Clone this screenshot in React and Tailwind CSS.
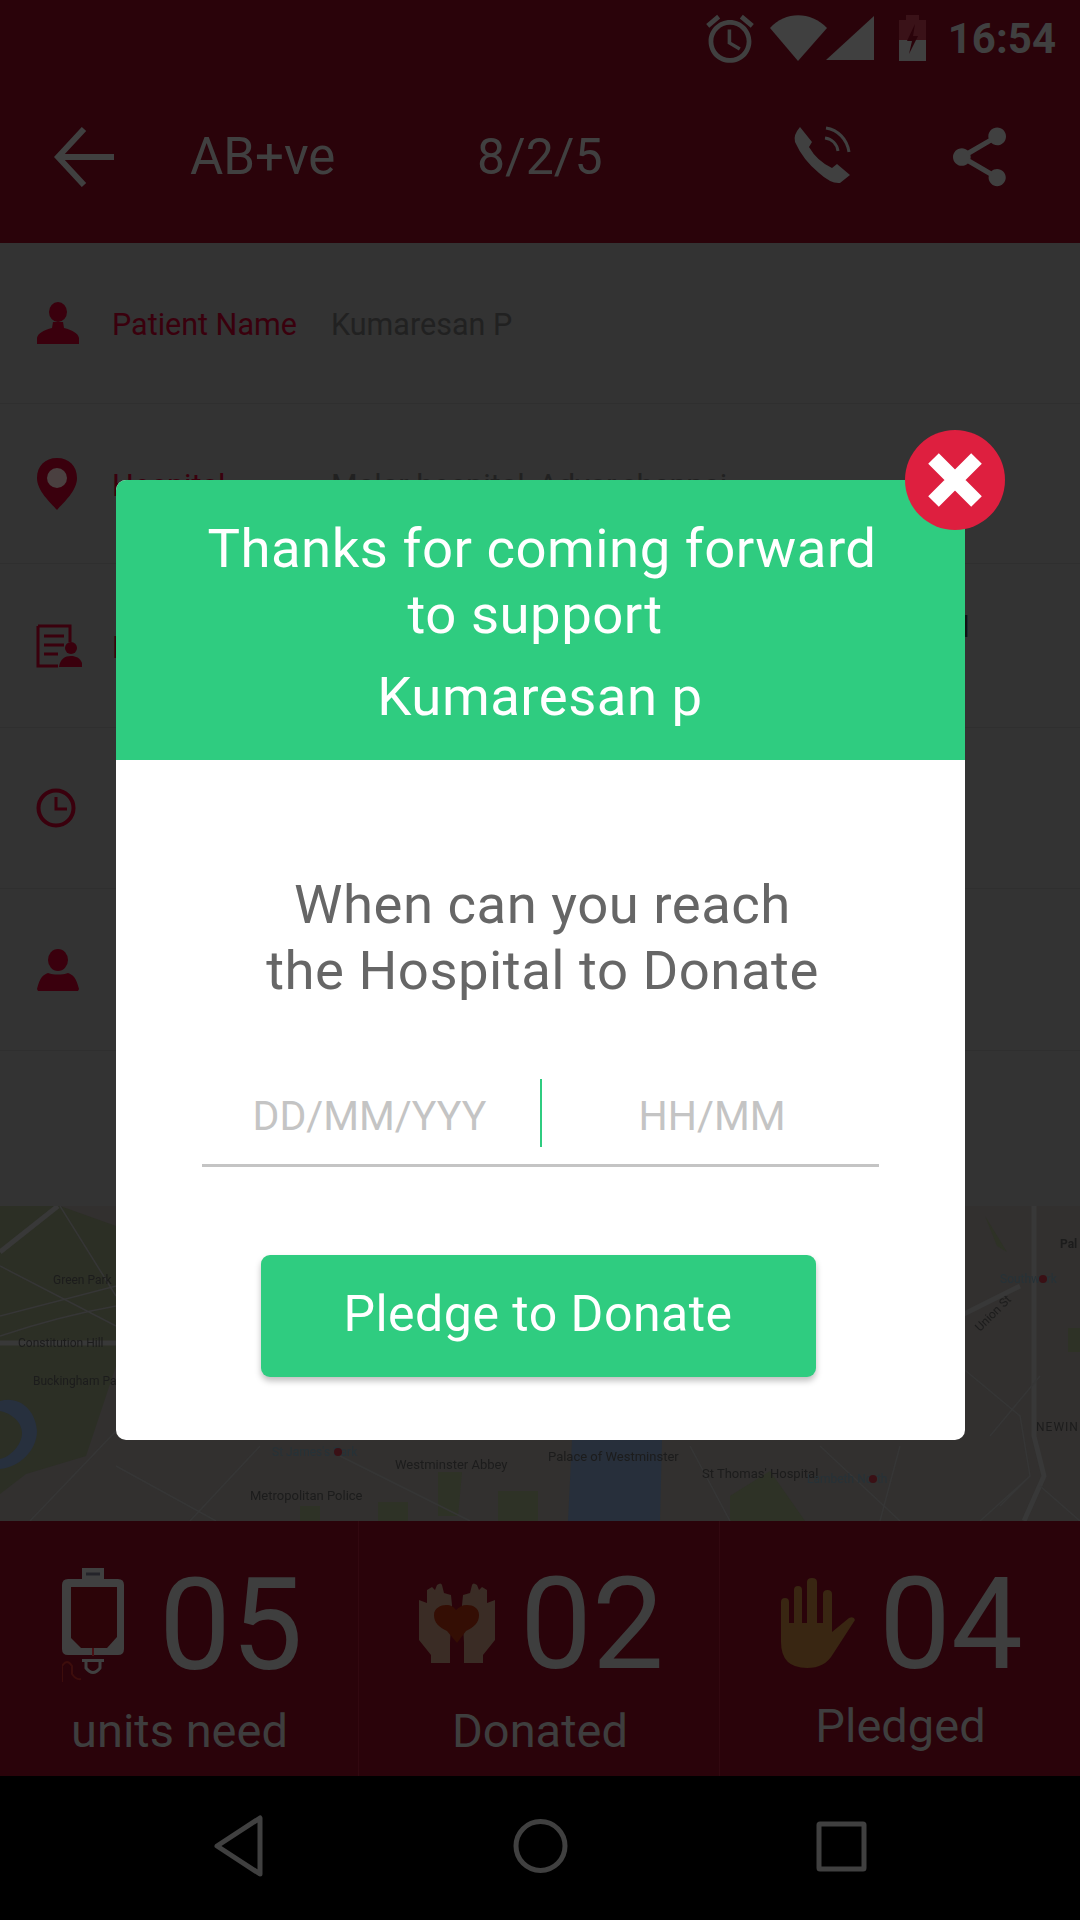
const rows = [
    { id: "patient", h: "h-[161px]", label: "Patient Name", value: "Kumaresan P", icon: <PatientIcon /> },
    { id: "hospital", h: "h-[160px]", label: "Hospital", value: "Malar hospital, Adyar,chennai", icon: <PinIcon /> },
    { id: "details", h: "h-[164px]", label: "Details", icon: <DocIcon /> },
    { id: "time", h: "h-[161px]", label: "Time", labelClass: "pl-[8px]", icon: <ClockIcon /> },
    { id: "contact", h: "h-[162px]", label: "Contact", labelClass: "pl-[8px]", icon: <PersonIcon /> },
];

function PatientIcon() {
    return (
        <svg width="44" height="42" viewBox="0 0 44 42" fill="#3a000d">
            <ellipse cx="22" cy="10" rx="9" ry="10" />
            <path d="M17 20h10l1 6c8 2 14 5 15 10v6H1v-6c1-5 7-8 15-10z" />
        </svg>
    );
}

function PinIcon() {
    return (
        <svg width="42" height="52" viewBox="0 0 42 52">
            <path fill="#3a000d" d="M21 0C9 0 1 8 1 20c0 13 13 24 20 32 7-8 20-19 20-32C41 8 33 0 21 0z" />
            <ellipse cx="21" cy="20" rx="10" ry="10" fill="#4a4040" />
        </svg>
    );
}

function DocIcon() {
    return (
        <svg width="46" height="44" viewBox="0 0 46 44" fill="none">
            <path stroke="#3a000d" strokeWidth="3" d="M2 2h32v16M2 2v40h20" />
            <path stroke="#3a000d" strokeWidth="3" d="M8 12h20M8 21h20M8 30h14" />
            <circle cx="35" cy="24" r="6" fill="#3a000d" />
            <path fill="#3a000d" d="M23 43c1-8 6-11 12-11s11 3 12 11z" />
        </svg>
    );
}

function ClockIcon() {
    return (
        <svg width="40" height="40" viewBox="0 0 40 40" fill="none" stroke="#3a000d">
            <circle cx="20" cy="20" r="17.5" strokeWidth="4" />
            <path strokeWidth="3" d="M20 9v12h11" />
        </svg>
    );
}

function PersonIcon() {
    return (
        <svg width="44" height="42" viewBox="0 0 44 42" fill="#3a000d">
            <ellipse cx="22" cy="11" rx="10" ry="11" />
            <path d="M12 24c6 2 14 2 20 0 5 2 8 4 11 16l-1 2H2l-1-2c3-12 6-14 11-16z" />
        </svg>
    );
}

function AlarmIcon() {
    return (
        <svg width="52" height="50" viewBox="1.5 1.5 21 21" fill="#404040" className="mr-[14px]">
            <path d="M22 5.72l-4.6-3.86-1.29 1.53 4.6 3.86L22 5.72zM7.88 3.39L6.6 1.86 2 5.71l1.29 1.53 4.59-3.85zM12.5 8H11v6l4.75 2.85.75-1.23-4-2.37V8zM12 4c-4.97 0-9 4.03-9 9s4.03 9 9 9 9-4.03 9-9-4.03-9-9-9zm0 16c-3.87 0-7-3.13-7-7s3.13-7 7-7 7 3.13 7 7-3.13 7-7 7z" />
        </svg>
    );
}

function SignalIcons() {
    return (
        <svg width="106" height="46" viewBox="0 0 106 46" fill="#404040" className="mr-[23px] mt-[1px]">
            <path d="M0 13C15-4 41-4 57 13L28 46z" />
            <path d="M56 45L104 1v44z" />
        </svg>
    );
}

function BatteryIcon() {
    return (
        <svg width="27" height="46" viewBox="0 0 27 46" className="mr-[22px] mt-[1px]">
            <path fill="#3a1218" d="M7 0h13v5h7v20H0V5h7z" />
            <path fill="#404040" d="M0 25h27v21H0z" />
            <path fill="#2a030a" d="M16 9l-8 17h5l-3 13 9-18h-5z" />
        </svg>
    );
}

function BackArrow() {
    return (
        <svg width="60" height="60" viewBox="0 0 60 60" fill="none" stroke="#404040" strokeWidth="6">
            <path d="M60 30H5M30 2L4 30l26 28" />
        </svg>
    );
}

function PhoneIcon() {
    return (
        <svg width="60" height="60" viewBox="0 0 60 60">
            <path fill="#404040" d="M7 1l12 15-3 5q8 14 23 21l5-4 13 11-10 8Q38 58 26 47 10 34 2 16 0 9 7 1z" />
            <path fill="none" stroke="#404040" strokeWidth="3" d="M33 2c12 2 21 11 23 24M32 12c7 1 12 6 13 13" />
        </svg>
    );
}

function ShareIcon() {
    return (
        <svg width="53" height="60" viewBox="3 2 18 20" fill="#404040">
            <path d="M18 16.08c-.76 0-1.44.3-1.96.77L8.91 12.7c.05-.23.09-.46.09-.7s-.04-.47-.09-.7l7.05-4.11c.54.5 1.25.81 2.04.81 1.66 0 3-1.34 3-3s-1.34-3-3-3-3 1.34-3 3c0 .24.04.47.09.7L8.04 9.81C7.5 9.31 6.79 9 6 9c-1.66 0-3 1.34-3 3s1.34 3 3 3c.79 0 1.5-.31 2.04-.81l7.12 4.16c-.05.21-.08.43-.08.65 0 1.61 1.31 2.92 2.92 2.92 1.61 0 2.92-1.31 2.92-2.92s-1.31-2.92-2.92-2.92z" />
        </svg>
    );
}

function BloodBagIcon() {
    return (
        <svg width="64" height="114" viewBox="0 0 64 114" fill="none">
            <path fill="#404040" d="M20 0h22v11H20z" />
            <path fill="#404040" d="M6 11h50q6 0 6 6v64q0 6-6 6H6q-6 0-6-6V17q0-6 6-6z" />
            <path fill="#2c0408" d="M9 19h46v50l-10 11H19L9 70z" />
            <path stroke="#24242a" strokeWidth="3" d="M24 6h14" />
            <path stroke="#4a1014" strokeWidth="2" d="M31 80v8" />
            <path fill="#404040" d="M20 91h22v3H20z" />
            <path stroke="#404040" strokeWidth="3" d="M24 94v6q7 9 14 0v-6" />
            <path stroke="#3d0d0c" strokeWidth="2" d="M0 114V98q5-8 10 0v8q4 6 9 5" />
        </svg>
    );
}

function HandsIcon() {
    const hand = "M12 80v-8L0 57V17l8 3V7l5-3 3 3 2-5q4-3 5 0l2 8 7 2 1 10-2 38v20z";
    return (
        <svg width="76" height="80" viewBox="0 0 76 80">
            <path fill="#3a2c25" d={hand} />
            <path fill="#3a2c25" d={hand} transform="matrix(-1 0 0 1 76 0)" />
            <path fill="#340e04" d="M38 60L28 48C20 44 15 40 15 32c0-7 7-10 12-10 5 0 8 2 10 5 3-3 6-5 11-5 6 0 12 3 12 10 0 8-5 12-13 16z" />
        </svg>
    );
}

function HandIcon() {
    return (
        <svg width="74" height="90" viewBox="0 0 74 90" fill="#392612">
            <path d="M0 24q0-4 4-4t4 4v21h5V12q0-4 4-4t4 4v33h5V4q0-4 5-4t5 4v41h6V16q0-4 4.5-4t4.5 4v38l17-14q5-2 6 2L52 76q-8 14-26 14Q0 90 0 64z" />
        </svg>
    );
}

function MapPanel() {
    return (
        <svg width="1080" height="315" viewBox="0 0 1080 315" className="block blur-[0.6px]">
            <rect width="1080" height="315" fill="#32302f" />
            <path fill="#2c2f25" d="M0 0h60l56 20v140l-30 90-60 18-26 20z" />
            <path fill="#27303e" d="M0 195c20-6 36 10 37 30 0 18-16 36-37 38v-10c10-2 22-14 22-26 0-12-12-20-22-22z" />
            <path fill="#272f3b" d="M572 234h90l-2 81h-92z" />
            <path fill="#2e3226" d="M438 266h24l-4 44h-20zM378 296h30v19h-30zM498 285h40v30h-40zM730 290l40-25 35 50h-75zM300 300h20v15h-20zM1068 122h12v24h-12zM985 10l22 36-10-6z" />
            <g fill="none" stroke="#363636" strokeWidth="1.5">
                <path stroke="#383838" strokeWidth="5" d="M0 46L58 0M0 137h116M1020 80l-60 30M1034 0v230l10 40-20 45" />
                <path d="M0 60l116 60M60 0l56 90M0 110l116-30M0 130q60-20 116-30M30 315l86-90M116 260l100 55M260 240l-70 75M340 250l130 65M690 240l40 75M820 240l80 75M900 240l-20 75M960 160l60 50 10 60-50 45M990 230l50-60M1040 280l40 35M1000 300l30-30" />
            </g>
            <g fontFamily="Roboto, sans-serif" fontSize="12" fill="#1c1c1c">
                <text x="53" y="78">Green Park</text>
                <text x="18" y="141">Constitution Hill</text>
                <text x="33" y="179">Buckingham Palace</text>
                <text x="395" y="263" fontSize="13">Westminster Abbey</text>
                <text x="548" y="255" fontSize="13">Palace of Westminster</text>
                <text x="702" y="272" fontSize="13">St Thomas' Hospital</text>
                <text x="250" y="294" fontSize="13">Metropolitan Police</text>
                <text x="1060" y="42" fontWeight="700">Pal</text>
                <text x="1036" y="225" letterSpacing="1">NEWIN</text>
                <text x="272" y="250" fill="#263238">St James's Park</text>
                <text x="807" y="277" fill="#263238">Lambeth North</text>
                <text x="1000" y="77" fill="#263238">Southwark</text>
                <text x="980" y="126" transform="rotate(-45 980 126)">Union St</text>
            </g>
            <circle cx="338" cy="246" r="4" fill="#3a1015" />
            <circle cx="873" cy="273" r="4" fill="#3a1015" />
            <circle cx="1043" cy="73" r="4" fill="#3a1015" />
        </svg>
    );
}

function Stat({ icon, value, label, numberClass, labelClass, width, gap }) {
    return (
        <div className={`flex flex-col ${width}`}>
            <div className={`flex items-start ${numberClass}`}>
                {icon}
                <span className={`text-[128px] leading-[133px] text-[#3e3e3e] ${gap}`}>{value}</span>
            </div>
            <div className={`text-center text-[47px] leading-[54px] text-[#3e3e3e] ${labelClass}`}>{label}</div>
        </div>
    );
}

function Modal() {
    return (
        <div className="absolute inset-0 flex items-center justify-center">
            <div className="relative flex h-[960px] w-[849px] flex-col rounded-[10px] bg-white">
                <div className="flex h-[280px] flex-col items-center rounded-t-[10px] bg-[#2fcc80] pt-[35px] text-[54.5px] leading-[66px] tracking-[0.5px] text-white">
                    <div className="pl-[4px]">Thanks for coming forward</div>
                    <div className="pr-[10px]">to support</div>
                    <div className="mt-[16px]">Kumaresan p</div>
                </div>
                <div className="flex flex-1 flex-col items-center">
                    <div className="mt-[111px] pl-[5px] text-center text-[54.5px] leading-[66px] tracking-[0.5px] text-[#666666]">
                        <div>When can you reach</div>
                        <div>the Hospital to Donate</div>
                    </div>
                    <div className="mt-[76px] flex h-[88px] w-[677px] items-start border-b-[3px] border-[#c4c4c4] text-[41px] leading-[68px] text-[#c4c4c4]">
                        <div className="w-[338px] pl-[51px] pt-[3px]">DD/MM/YYY</div>
                        <div className="h-[68px] w-[2px] bg-[#2fcc80]" />
                        <div className="pl-[97px] pt-[3px]">HH/MM</div>
                    </div>
                    <button className="mt-[88px] mr-[4px] h-[122px] w-[555px] rounded-[9px] bg-[#2fcc80] pb-[4px] text-[50px] tracking-[0.5px] text-white shadow-[0_4px_6px_rgba(0,0,0,0.25)]">
                        Pledge to Donate
                    </button>
                </div>
                <div className="absolute -top-[50px] -right-[40px] h-[100px] w-[100px] rounded-full bg-[#de1f3f]">
                    <svg width="100" height="100" viewBox="0 0 100 100" stroke="white" strokeWidth="15" fill="none">
                        <path d="M28.5 28.5l43 43M71.5 28.5l-43 43" />
                    </svg>
                </div>
            </div>
        </div>
    );
}

export default function App() {
    return (
        <div className="relative flex h-[1920px] w-[1080px] flex-col overflow-hidden bg-[#333333] font-[Roboto,sans-serif]">
            <div className="flex h-[73px] items-start justify-end bg-[#2a030a] pt-[14px]">
                <AlarmIcon />
                <SignalIcons />
                <BatteryIcon />
                <span className="mr-[24px] mt-[5px] text-[42px] leading-[40px] font-bold text-[#404040]">16:54</span>
            </div>
            <div className="flex h-[170px] items-start bg-[#2a030a] pt-[54px]">
                <div className="ml-[54px] w-[136px]"><BackArrow /></div>
                <span className="w-[287px] text-[51px] leading-[60px] text-[#404040]">AB+ve</span>
                <span className="w-[316px] text-[50px] leading-[60px] text-[#404040]">8/2/5</span>
                <div className="w-[160px] -mt-[1px]"><PhoneIcon /></div>
                <ShareIcon />
            </div>
            {rows.map((row) => (
                <div key={row.id} className={`flex items-center border-b border-[#2f2f2f] ${row.h}`}>
                    <div className="flex w-[112px] pl-[36px]">{row.icon}</div>
                    <span className={`w-[219px] pt-[4px] text-[30.5px] text-[#3a000d] ${row.labelClass || ""}`}>{row.label}</span>
                    {row.value && <span className="pt-[4px] text-[30.5px] text-[#212121]">{row.value}</span>}
                    {row.id === "details" && (
                        <span className="ml-auto mr-[111px] mb-[38px] text-[30px] font-bold text-[#111111]">Required</span>
                    )}
                </div>
            ))}
            <div className="h-[155px]" />
            <MapPanel />
            <div className="flex h-[255px] bg-[#2a030a]">
                <Stat icon={<BloodBagIcon />} value="05" label="units need" width="w-[359px] border-r border-[#320810]" numberClass="pl-[62px] pt-[47px]" gap="ml-[33px] -mt-[9px]" labelClass="mt-[12px] ml-[1px]" />
                <Stat icon={<div className="mt-[15px]"><HandsIcon /></div>} value="02" label="Donated" width="w-[361px] border-r border-[#320810]" numberClass="pl-[60px] pt-[47px]" gap="ml-[25px] -mt-[10px]" labelClass="mt-[13px] ml-[2px]" />
                <Stat icon={<div className="mt-[10px]"><HandIcon /></div>} value="04" label="Pledged" width="w-[360px]" numberClass="pl-[61px] pt-[47px]" gap="ml-[24px] -mt-[10px]" labelClass="mt-[8px] ml-[1px]" />
            </div>
            <div className="flex h-[144px] flex-1 items-center bg-black pb-[4px]">
                <svg width="1080" height="80" viewBox="0 0 1080 80" fill="none" stroke="#404040" strokeWidth="5">
                    <path strokeLinejoin="round" d="M260 12v56L217 40z" />
                    <circle cx="540.5" cy="40" r="24.5" />
                    <rect x="819" y="18" width="45" height="45" rx="1" />
                </svg>
            </div>
            <Modal />
        </div>
    );
}
